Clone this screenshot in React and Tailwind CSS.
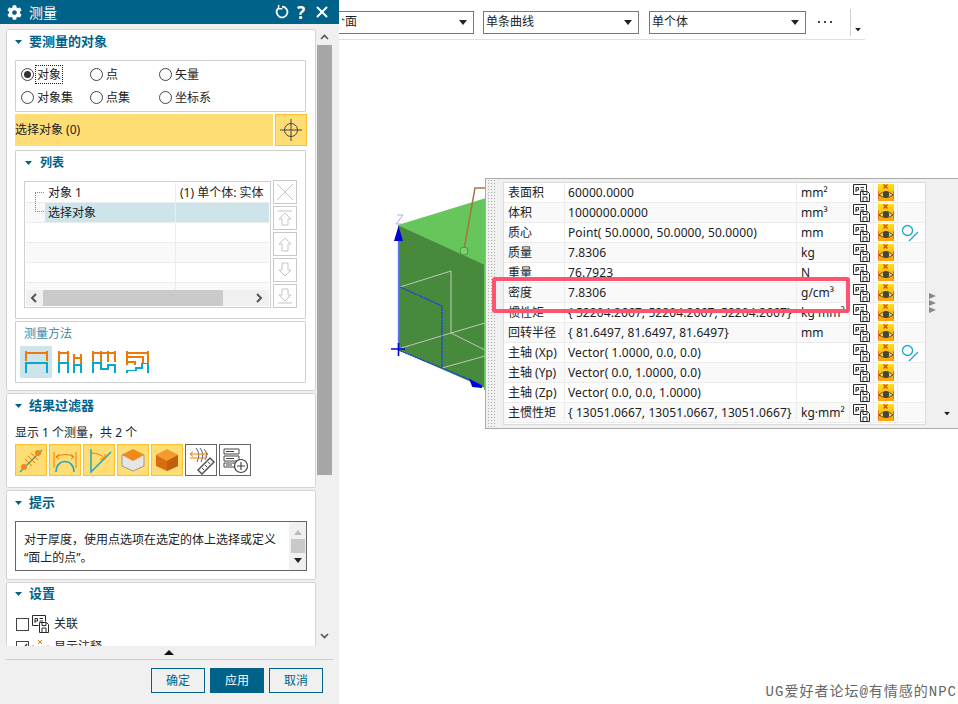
import React from "react";
import { X } from "lucide-react";
import { FaCog } from "react-icons/fa";

const rows = [
  { name: "表面积", value: "60000.0000", unit: "mm²" },
  { name: "体积", value: "1000000.0000", unit: "mm³" },
  { name: "质心", value: "Point( 50.0000, 50.0000, 50.0000)", unit: "mm", axis: true },
  { name: "质量", value: "7.8306", unit: "kg" },
  { name: "重量", value: "76.7923", unit: "N" },
  { name: "密度", value: "7.8306", unit: "g/cm³" },
  { name: "惯性矩", value: "{ 52204.2667, 52204.2667, 52204.2667}", unit: "kg·mm²" },
  { name: "回转半径", value: "{ 81.6497, 81.6497, 81.6497}", unit: "mm" },
  { name: "主轴 (Xp)", value: "Vector( 1.0000, 0.0, 0.0)", unit: "", axis: true },
  { name: "主轴 (Yp)", value: "Vector( 0.0, 1.0000, 0.0)", unit: "" },
  { name: "主轴 (Zp)", value: "Vector( 0.0, 0.0, 1.0000)", unit: "" },
  { name: "主惯性矩", value: "{ 13051.0667, 13051.0667, 13051.0667}", unit: "kg·mm²" },
];

const Caret = ({ className = "" }) => (
  <svg width="8" height="5" viewBox="0 0 8 5" className={className}>
    <path d="M0 0H8L4 5Z" fill="#222" />
  </svg>
);

const Heading = ({ children, className = "" }) => (
  <div className={`flex h-[24px] items-center pl-[8px] ${className}`}>
    <svg width="7" height="4" viewBox="0 0 7 4">
      <path d="M0 0H7L3.5 4Z" fill="#006288" />
    </svg>
    <span className="ml-[7px] text-[13px] font-bold text-[#006288]">{children}</span>
  </div>
);

const Section = ({ className = "", children }) => (
  <section className={`shrink-0 rounded-[2px] border border-[#d4d4d4] bg-white ${className}`}>
    {children}
  </section>
);

const Radio = ({ label, checked, focused }) => (
  <div className="flex items-center">
    <span className="flex h-[13px] w-[13px] items-center justify-center rounded-full border border-[#444] bg-white">
      {checked && <span className="h-[7px] w-[7px] rounded-full bg-[#333]" />}
    </span>
    <span className={`ml-[2px] px-[1px] leading-[17px] ${focused ? "outline-1 outline-dotted outline-[#222]" : ""}`}>
      {label}
    </span>
  </div>
);

const SideArrow = ({ d }) => (
  <div className="flex h-[24px] w-[24px] items-center justify-center border border-[#c8c8c8] bg-white">
    <svg width="20" height="20" viewBox="0 0 20 20" fill="none" stroke="#c4c4c4" strokeWidth="1">
      <path d={d} />
    </svg>
  </div>
);

const Method = ({ active, orange, blue }) => (
  <svg
    width="32"
    height="32"
    viewBox="0 0 32 32"
    fill="none"
    strokeWidth="1.2"
    shapeRendering="crispEdges"
    className={active ? "bg-[#cde4ea]" : ""}
  >
    <path d={orange} stroke="#ec7a08" />
    <path d={blue} stroke="#05a8d0" />
  </svg>
);

const FilterBtn = ({ on, children }) => (
  <div className={`h-[32px] w-[32px] border ${on ? "border-[#ffc02d] bg-[#ffdd75]" : "border-[#666] bg-white"}`}>
    <svg width="30" height="30" viewBox="0 0 30 30" fill="none">
      {children}
    </svg>
  </div>
);

const SaveIcon = () => (
  <svg width="17" height="18" viewBox="0 0 17 18" fill="none" stroke="#2a2a2a" strokeWidth="1">
    <path d="M.5.5H13.5V6.5M.5.5V10.5H6.5" />
    <path d="M3 8V3.5H5.5V6H3M7.5 3.5H11M7.5 6H11" />
    <path d="M7.5 7.5H14.5L16.5 9.5V17.5H7.5Z" fill="#fff" />
    <path d="M10 7.5V10.5H14V7.5M10 17.5V13H14V17.5" />
  </svg>
);

const EyeIcon = () => (
  <svg width="16" height="17" viewBox="0 0 16 17" fill="none">
    <defs>
      <linearGradient id="eyeBg" x1="0" y1="0" x2="0" y2="1">
        <stop offset="0" stopColor="#ffdf20" />
        <stop offset="1" stopColor="#ff9f0a" />
      </linearGradient>
    </defs>
    <rect width="16" height="17" fill="url(#eyeBg)" />
    <path d="M5.5 .5L9.5 4.5M9.5 .5L5.5 4.5" stroke="#d9480f" strokeWidth="1.3" />
    <path d="M1 11Q8 4 15 11Q8 16 1 11Z" fill="#ffd86a" stroke="#5a4a20" />
    <circle cx="8" cy="10.5" r="3.2" fill="#45453a" />
    <path d="M.5 7V15M15.5 7V15" stroke="#e0701c" />
  </svg>
);

const AxisIcon = () => (
  <svg width="18" height="18" viewBox="0 0 18 18" fill="none" stroke="#1aa7d4" strokeWidth="1.3">
    <circle cx="6.5" cy="6.5" r="5" />
    <path d="M17 8L8 17" />
  </svg>
);

const Select = ({ className = "", children }) => (
  <div className={`flex h-[23px] items-center justify-between border border-[#777] bg-white pr-[6px] ${className}`}>
    <span className="text-[12px] leading-none">{children}</span>
    <Caret />
  </div>
);

export default function App() {
  return (
    <div className="flex h-[704px] w-[958px] overflow-hidden bg-white font-['Noto_Sans','Noto_Sans_CJK_SC',sans-serif] text-[12px] text-[#222]">
      <aside className="flex w-[339px] shrink-0 flex-col bg-[#f0f0f0]">
        <header className="flex h-[24px] items-center bg-[#006288] pl-[7px] pr-[8px] text-white">
          <FaCog size={15} />
          <span className="ml-[7px] text-[14px]">测量</span>
          <svg width="14" height="14" viewBox="0 0 14 14" fill="none" stroke="#fff" strokeWidth="1.8" className="ml-auto">
            <path d="M3.2 3.2A5.4 5.4 0 1 0 7 1.6" />
            <path d="M3.6 0V3.8H7.4" strokeWidth="1.4" />
          </svg>
          <span className="ml-[6px] w-[12px] text-center text-[17px] font-bold leading-none">?</span>
          <X size={18} strokeWidth={2.6} className="ml-[6px]" />
        </header>

        <div className="flex h-[622px] pt-[5px]">
          <div className="ml-[6px] flex w-[310px] flex-col gap-[2px] overflow-hidden">
            <Section className="h-[362px] px-[8px]">
              <div className="-mx-[8px]">
                <Heading>要测量的对象</Heading>
              </div>
              <div className="mt-[6px] grid h-[52px] w-[291px] grid-cols-[69px_69px_1fr] content-center gap-y-[6px] rounded-[1px] border border-[#cfcfcf] pl-[5px]">
                <Radio label="对象" checked focused />
                <Radio label="点" />
                <Radio label="矢量" />
                <Radio label="对象集" />
                <Radio label="点集" />
                <Radio label="坐标系" />
              </div>
              <div className="mt-[2px] flex h-[32px] w-[292px] gap-[2px]">
                <div className="flex flex-1 items-center bg-[#ffdd75]">选择对象 (0)</div>
                <div className="flex w-[32px] items-center justify-center border border-[#ffc02d] bg-[#ffdd75]">
                  <svg width="22" height="22" viewBox="0 0 22 22" fill="none" stroke="#444" strokeWidth="1">
                    <circle cx="11" cy="11" r="6.5" />
                    <path d="M0 11H22M11 0V22" />
                  </svg>
                </div>
              </div>
              <div className="mt-[4px] h-[169px] w-[291px] rounded-[1px] border border-[#cfcfcf] px-[8px]">
                <div className="flex h-[23px] items-center pl-[1px]">
                  <svg width="7" height="4" viewBox="0 0 7 4">
                    <path d="M0 0H7L3.5 4Z" fill="#006288" />
                  </svg>
                  <span className="ml-[8px] font-bold text-[#006288]">列表</span>
                </div>
                <div className="mt-[7px] flex gap-[2px]">
                  <div className="relative h-[127px] w-[248px] border border-[#cfcfcf] p-[1px]">
                    {[0, 1, 2, 3, 4, 5].map((i) => (
                      <div
                        key={i}
                        className={`flex border-b border-[#ececec] ${i % 2 === 1 ? "bg-[#f9f9f9]" : "bg-white"} ${i === 5 ? "h-[8px]" : "h-[20px]"}`}
                      >
                        <div className={`ml-[19px] w-[130px] pl-[3px] leading-[19px] ${i === 1 ? "bg-[#cde4ea]" : ""}`}>
                          {i === 0 && "对象 1"}
                          {i === 1 && "选择对象"}
                        </div>
                        <div className={`flex-1 border-l border-[#ececec] pl-[4px] leading-[19px] ${i === 1 ? "bg-[#cde4ea]" : ""}`}>
                          {i === 0 && "(1) 单个体: 实体"}
                        </div>
                      </div>
                    ))}
                    {/* tree connector */}
                    <div className="absolute left-[10px] top-[10px] h-[20px] w-[9px] border-b border-l border-t border-dotted border-[#888]" />
                    <div className="absolute bottom-[1px] left-[1px] right-[1px] flex h-[16px] items-center bg-[#f0f0f0]">
                      <svg width="17" height="10" viewBox="0 0 17 10" fill="none" stroke="#555" strokeWidth="2">
                        <path d="M10 1L6 5L10 9" />
                      </svg>
                      <div className="h-[16px] w-[180px] bg-[#cacaca]" />
                      <svg width="18" height="10" viewBox="0 0 18 10" fill="none" stroke="#555" strokeWidth="2" className="ml-auto">
                        <path d="M6 1L10 5L6 9" />
                      </svg>
                    </div>
                  </div>
                  <div className="-mt-[1px] flex flex-col gap-[2px]">
                    <SideArrow d="M2 2L18 18M18 2L2 18" />
                    <SideArrow d="M3 3H17M10 5L16 11H13V17H7V11H4Z" />
                    <SideArrow d="M10 4L16 10H13V17H7V10H4Z" />
                    <SideArrow d="M10 16L16 10H13V3H7V10H4Z" />
                    <SideArrow d="M3 17H17M10 15L16 9H13V3H7V9H4Z" />
                  </div>
                </div>
              </div>
              <div className="mt-[2px] h-[62px] w-[291px] rounded-[1px] border border-[#cfcfcf] pl-[4px]">
                <div className="pl-[4px] pt-[3px] leading-[18px] text-[#3b87a3]">测量方法</div>
                <div className="mt-[3px] flex gap-[2px]">
                  <Method active orange="M6 5V15M27 5V15M6 7H27" blue="M6 27V17H27V27" />
                  <Method orange="M5 5V17M14 5V17M5 7H14M20 8V18M27 8V18M20 12H27" blue="M5 27V17H14V27M20 27V19H27V27" />
                  <Method orange="M5 5V16M13 5V16M20 5V16M27 5V16M5 7H27" blue="M5 27V17H13V23H20V19H27V27" />
                  <Method orange="M5 5V19M26 5V17M5 7H26M5 11H21V17M5 16H13V19" blue="M5 27V24.5H14V22H20V17.5H26V27" />
                </div>
              </div>
            </Section>

            <Section className="h-[95px] px-[8px]">
              <div className="-mx-[8px]">
                <Heading>结果过滤器</Heading>
              </div>
              <div className="mt-[6px] leading-[18px]">显示 1 个测量，共 2 个</div>
              <div className="mt-[2px] flex gap-[2px]">
                <FilterBtn on>
                  <path d="M4 27L26 5" stroke="#1aa7c4" strokeWidth="1.2" />
                  <path d="M9 14l7 7M12 11l7 7M15 8l7 7" stroke="#ec7a08" />
                  <circle cx="8" cy="22" r="3" fill="#ef8a1c" />
                  <circle cx="22" cy="8" r="3" fill="#ef8a1c" />
                </FilterBtn>
                <FilterBtn on>
                  <path d="M6 27C6 13 24 13 24 27" stroke="#1aa7c4" strokeWidth="1.5" />
                  <path d="M4 7V23M26 7V23M6 12Q15 7 24 12M6 12L9 9M6 12L9 14M24 12L21 9M24 12L21 14" stroke="#ec7a08" />
                </FilterBtn>
                <FilterBtn on>
                  <path d="M7 4V27L27 7" stroke="#1aa7c4" strokeWidth="1.5" />
                  <path d="M7 8Q17 8 21 14M21 9V14H16" stroke="#ec7a08" />
                </FilterBtn>
                <FilterBtn on>
                  <path d="M4 10L15 5L26 10V21L15 26L4 21Z" fill="#e6e6e6" stroke="#999" />
                  <path d="M4 10L15 4L26 10L15 16Z" fill="#ef8a1c" />
                </FilterBtn>
                <FilterBtn on>
                  <path d="M4 10L15 5L26 10V21L15 26L4 21Z" fill="#d96e10" />
                  <path d="M4 10L15 4L26 10L15 16Z" fill="#f59a2c" />
                  <path d="M15 16V26L26 21V10Z" fill="#c25f0a" />
                </FilterBtn>
                <FilterBtn>
                  <path d="M10 3Q15 9 11 17M14 3Q19 9 15 17M18 4Q23 9 19 15" stroke="#666" />
                  <path d="M4 9H22M4 9L7 6.5M4 9L7 11.5M22 9L19 6.5M22 9L19 11.5M4 13H20" stroke="#ec7a08" />
                  <path d="M12 25L24 13L28 17L16 29Z" fill="#fff" stroke="#555" strokeWidth="1.5" />
                  <path d="M16 23l2 2M19 20l2 2M22 17l2 2" stroke="#555" />
                </FilterBtn>
                <FilterBtn>
                  <path d="M4 4H19V9H4ZM4 11H19V16H4ZM4 18H15V22H4Z" stroke="#444" />
                  <path d="M6 6.5H14M6 13.5H14M6 20H12" stroke="#444" />
                  <circle cx="21" cy="21" r="6.5" fill="#fff" stroke="#444" strokeWidth="1.2" />
                  <path d="M17 21H25M21 17V25" stroke="#444" strokeWidth="1.2" />
                </FilterBtn>
              </div>
            </Section>

            <Section className="h-[90px] px-[8px]">
              <div className="-mx-[8px]">
                <Heading>提示</Heading>
              </div>
              <div className="mt-[6px] flex h-[50px] w-[292px] border border-[#666]">
                <div className="flex-1 pl-[8px] pt-[9px] leading-[18px]">
                  对于厚度，使用点选项在选定的体上选择或定义
                  <br />
                  “面上的点”。
                </div>
                <div className="flex w-[17px] flex-col items-center bg-[#f0f0f0] pt-[8px]">
                  <svg width="8" height="5" viewBox="0 0 8 5">
                    <path d="M0 5H8L4 0Z" fill="#bbb" />
                  </svg>
                  <div className="mt-[4px] h-[14px] w-[14px] bg-[#c8c8c8]" />
                  <Caret className="mt-[5px]" />
                </div>
              </div>
            </Section>

            <Section className="h-[100px]">
              <Heading className="-mt-[1px]">设置</Heading>
              <div className="mt-[8px] flex h-[20px] items-center pl-[9px]">
                <span className="h-[13px] w-[13px] border border-[#444]" />
                <span className="ml-[3px]">
                  <SaveIcon />
                </span>
                <span className="ml-[5px]">关联</span>
              </div>
              <div className="mt-[3px] flex h-[20px] items-center pl-[9px]">
                <span className="flex h-[13px] w-[13px] items-center justify-center border border-[#444]">
                  <svg width="11" height="11" viewBox="0 0 11 11" fill="none" stroke="#333" strokeWidth="1.4">
                    <path d="M1 6L4 9L10 2" />
                  </svg>
                </span>
                <span className="ml-[3px] h-[16px] w-[18px]">
                  <svg width="18" height="16" viewBox="0 0 18 16" fill="none" stroke="#ec7a08">
                    <path d="M6 1L10 5M10 1L6 5M1 6V14M16 6V14" />
                    <path d="M3 10Q8 5 14 10Q8 14 3 10Z" stroke="#555" />
                  </svg>
                </span>
                <span className="ml-[4px]">显示注释</span>
              </div>
            </Section>
          </div>

          {/* outer scrollbar */}
          <div className="ml-[1px] flex w-[15px] flex-col items-center">
            <div className="flex h-[16px] items-center">
              <svg width="9" height="6" viewBox="0 0 9 6" fill="none" stroke="#555" strokeWidth="1.6">
                <path d="M1 5L4.5 1.5L8 5" />
              </svg>
            </div>
            <div className="h-[430px] w-full bg-[#a6a6a6]" />
            <div className="mt-auto flex h-[16px] items-center pb-[4px]">
              <svg width="9" height="6" viewBox="0 0 9 6" fill="none" stroke="#555" strokeWidth="1.6">
                <path d="M1 1L4.5 4.5L8 1" />
              </svg>
            </div>
          </div>
        </div>

        <div className="mx-[6px] flex h-[14px] items-center justify-center border-b border-[#cfcfcf]">
          <svg width="10" height="5" viewBox="0 0 10 5" className="-ml-[2px]">
            <path d="M0 5H10L5 0Z" fill="#111" />
          </svg>
        </div>
        <div className="flex justify-end gap-[5px] pr-[16px] pt-[8px]">
          <button className="h-[25px] w-[54px] border border-[#006288] text-[#006288]">确定</button>
          <button className="h-[25px] w-[54px] bg-[#006288] text-white">应用</button>
          <button className="h-[25px] w-[54px] border border-[#006288] text-[#006288]">取消</button>
        </div>
      </aside>

      <main className="flex min-w-0 flex-1 flex-col">
        <div className="flex h-[40px] w-[526px] items-center border-b border-[#e0e0e0] pt-[5px]">
          <Select className="w-[135px] border-l-0 pl-[3px]">
            <span className="inline-block w-[3px] overflow-hidden align-bottom">
              <span className="-ml-[9px] inline-block">个</span>
            </span>
            面
          </Select>
          <Select className="ml-[9px] w-[156px] pl-[2px]">单条曲线</Select>
          <Select className="ml-[10px] w-[157px] pl-[2px]">单个体</Select>
          <div className="ml-[12px] flex gap-[4px]">
            <span className="h-[2px] w-[2px] bg-[#444]" />
            <span className="h-[2px] w-[2px] bg-[#444]" />
            <span className="h-[2px] w-[2px] bg-[#444]" />
          </div>
          <div className="ml-[18px] h-[27px] border-l border-[#d0d0d0]" />
          <Caret className="ml-[3px] mt-[14px] scale-75" />
        </div>

        <div className="relative flex-1">
          {/* model view */}
          <svg
            className="absolute left-[46px] top-[139px]"
            width="110"
            height="221"
            viewBox="385 179 110 221"
            fill="none"
          >
            <path d="M398 225L486 198V266Z" fill="#66c65c" />
            <path d="M398 225L485 265V388L398 350Z" fill="#488a3c" />
            <path d="M484 265H486V390H484Z" fill="#66c65c" />
            <path d="M400 287L451 271V333M398 349L451 333L485 350M442 368L485 356M451 333L485 323" stroke="#c0c8bc" strokeWidth="1" />
            <path d="M400 287L442 306V368" stroke="#1038ff" strokeWidth="1.2" strokeDasharray="2 0.6" />
            <path d="M398 350L442 368L482 385" stroke="#1038ff" strokeWidth="1.2" strokeDasharray="2 0.6" />
            <path d="M398.5 240V350" stroke="#5a78f0" strokeWidth="1.4" />
            <path d="M398.5 226L394 241H403Z" fill="#0000d8" />
            <path d="M391 349H405M398.5 343V356" stroke="#0000e0" strokeWidth="1.6" />
            <path d="M471 381L482 387L473 386Z" fill="#0000d8" stroke="#0000d8" strokeWidth="2" />
            <path d="M464 249L475 188H486" stroke="#a87444" strokeWidth="1.5" />
            <circle cx="464" cy="251" r="4" fill="#7bd06f" stroke="#4a9a40" />
            <path d="M397 215H403L396 224H402" stroke="#9aa8f0" strokeWidth="0.9" />
          </svg>

          {/* floating results table */}
          <div className="absolute left-[146px] top-[138px] flex h-[251px] w-[473px] border-y border-l border-[#aaa] bg-[#f0f0f0]">
            <div className="ml-[1px] w-[9px] bg-[radial-gradient(#aaa_1px,transparent_1px)] bg-[length:3px_3px]" />
            <div className="ml-[7px] mt-[3px] h-[243px] w-[423px] border border-[#dcdcdc] bg-white">
              {rows.map((r, i) => (
                <div
                  key={r.name}
                  className={`grid h-[20px] grid-cols-[60px_232px_53px_24px_24px_24px] border-b border-[#ececec] leading-[19px] ${i % 2 === 1 ? "bg-[#f9f9f9]" : "bg-white"}`}
                >
                  <div className="whitespace-nowrap pl-[4px]">{r.name}</div>
                  <div className="whitespace-nowrap border-l border-[#ececec] pl-[3px] tracking-[0.1px]">{r.value}</div>
                  <div className="whitespace-nowrap border-l border-[#ececec] pl-[4px]">{r.unit}</div>
                  <div className="flex items-center justify-center border-l border-[#ececec]">
                    <SaveIcon />
                  </div>
                  <div className="flex items-center justify-center border-l border-[#ececec]">
                    <EyeIcon />
                  </div>
                  <div className="flex items-center justify-center border-l border-[#ececec]">
                    {r.axis && <AxisIcon />}
                  </div>
                </div>
              ))}
            </div>
            <div className="relative flex-1">
              <div className="absolute left-[3px] top-[114px] flex flex-col gap-[1px]">
                {[0, 1, 2].map((i) => (
                  <svg key={i} width="7" height="6" viewBox="0 0 7 6">
                    <path d="M0 0L7 3L0 6Z" fill="#888" />
                  </svg>
                ))}
              </div>
              <Caret className="absolute left-[17px] top-[232px] scale-75" />
            </div>
          </div>

          {/* red callout */}
          <div className="absolute left-[153px] top-[237px] h-[36px] w-[358px] rounded-[3px] border-[4px] border-[#ff5470]" />

          <div className="absolute bottom-[2px] right-[1px] font-['Liberation_Mono','Noto_Sans_CJK_SC',monospace] text-[14px] leading-[20px] tracking-[1px] text-[#666]">
            UG爱好者论坛@有情感的NPC
          </div>
        </div>
      </main>
    </div>
  );
}
